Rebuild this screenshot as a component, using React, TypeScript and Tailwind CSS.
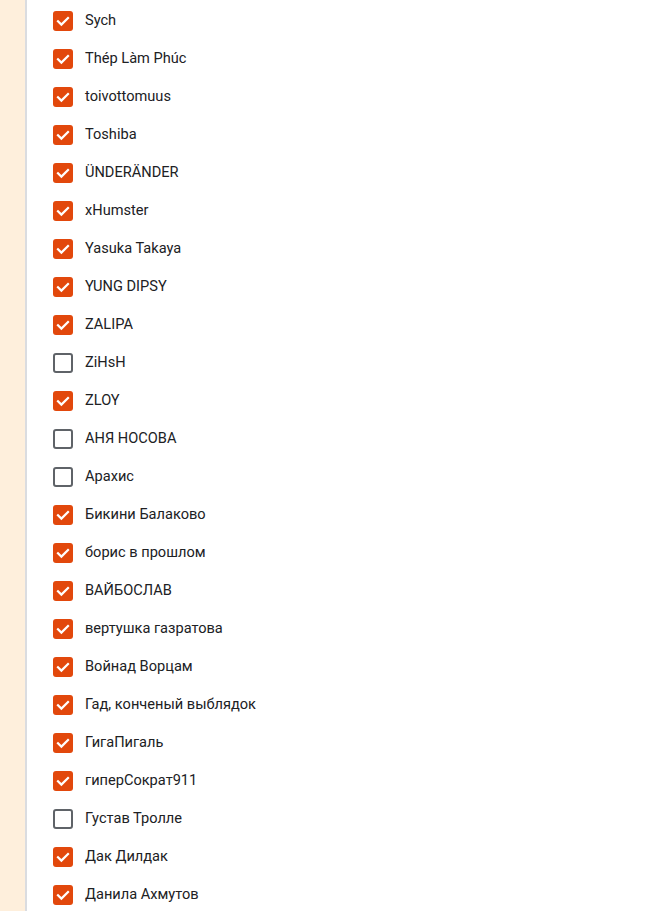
import { useState } from 'react';

const artists: [string, boolean][] = [
  ['Sych', true],
  ['Thép Làm Phúc', true],
  ['toivottomuus', true],
  ['Toshiba', true],
  ['ÜNDERÄNDER', true],
  ['xHumster', true],
  ['Yasuka Takaya', true],
  ['YUNG DIPSY', true],
  ['ZALIPA', true],
  ['ZiHsH', false],
  ['ZLOY', true],
  ['АНЯ НОСОВА', false],
  ['Арахис', false],
  ['Бикини Балаково', true],
  ['борис в прошлом', true],
  ['ВАЙБОСЛАВ', true],
  ['вертушка газратова', true],
  ['Войнад Ворцам', true],
  ['Гад, конченый выблядок', true],
  ['ГигаПигаль', true],
  ['гиперСократ911', true],
  ['Густав Тролле', false],
  ['Дак Дилдак', true],
  ['Данила Ахмутов', true],
];

function Checkbox({ checked }: { checked: boolean }) {
  if (!checked) {
    return <span className="block w-5 h-5 rounded-[3px] border-2 border-[#5f6368] bg-white" />;
  }
  return (
    <span className="flex items-center justify-center w-5 h-5 rounded-[3px] bg-[#e2480c]">
      <svg width="20" height="20" viewBox="0 0 20 20" fill="none">
        <path d="M5 10.2 L8.4 13.6 L15 7" stroke="white" strokeWidth="2.2" strokeLinecap="square" />
      </svg>
    </span>
  );
}

export default function App() {
  const [state, setState] = useState(artists.map(([, c]) => c));

  return (
    <div className="flex h-[911px] overflow-hidden bg-white font-['Roboto','Liberation_Sans',sans-serif]">
      {/* side strip */}
      <div className="w-[27px] shrink-0 bg-[#feefdc] border-r-2 border-[#dadce0]" />

      <ul className="flex flex-col pl-[24px] ml-[2px] pt-[2px]">
        {artists.map(([name], i) => (
          <li
            key={name}
            className="flex items-center gap-3 h-[38px] shrink-0 cursor-pointer"
            onClick={() => setState(s => s.map((v, j) => (j === i ? !v : v)))}
          >
            <Checkbox checked={state[i]} />
            <span className="text-[14.6px] text-[#202124]">{name}</span>
          </li>
        ))}
      </ul>
    </div>
  );
}
